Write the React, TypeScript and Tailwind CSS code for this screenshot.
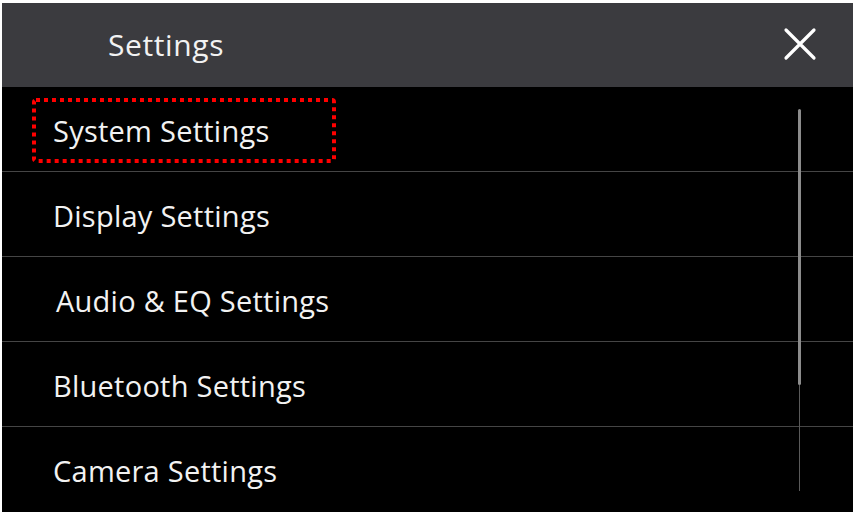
import React from 'react';

const items = [
  'System Settings',
  'Display Settings',
  'Audio & EQ Settings',
  'Bluetooth Settings',
  'Camera Settings',
];

const App: React.FC = () => {
  return (
    <div className="w-[858px] h-[517px] bg-white pl-[2px] pt-[3px]">
      <div
        className="relative w-[851px] h-[509px] bg-black text-[#f2f2f2] flex flex-col"
        style={{ fontFamily: '"Open Sans", "Noto Sans", sans-serif' }}
      >
        {/* header */}
        <div className="h-[85px] bg-[#3b3b3f] flex items-center justify-between pl-[106px] pr-[36px]">
          <span className="text-[30px] leading-none tracking-[0.6px]">Settings</span>
          <svg width="34" height="34" viewBox="0 0 34 34" className="mt-[-2px]">
            <path d="M3 3 L31 31 M31 3 L3 31" stroke="#fff" strokeWidth="3.2" strokeLinecap="round" />
          </svg>
        </div>

        {/* list */}
        <div className="flex flex-col">
          {items.map((label, idx) => (
            <div
              key={label}
              className={`relative h-[85px] flex items-center ${idx < items.length - 1 ? 'border-b border-[#454545]' : ''} ${idx === 2 ? 'pl-[54px]' : 'pl-[51px]'}`}
            >
              <span className="text-[29px] leading-none tracking-[0.25px] pt-[2px]">{label}</span>
              {idx === 0 && (
                <svg className="absolute left-[30px] top-[11px]" width="304" height="65">
                  <rect
                    x="2"
                    y="2"
                    width="300"
                    height="61"
                    rx="2"
                    fill="none"
                    stroke="#ff0000"
                    strokeWidth="4"
                    strokeDasharray="4 4"
                  />
                </svg>
              )}
            </div>
          ))}
        </div>

        {/* scrollbar */}
        <div className="absolute left-[796px] top-[106px] w-[3px] h-[276px] rounded-full bg-[#8c8c8c]" />
        <div className="absolute left-[797px] top-[382px] w-[1px] h-[106px] bg-[#5a5a5a]" />
      </div>
    </div>
  );
};

export default App;
